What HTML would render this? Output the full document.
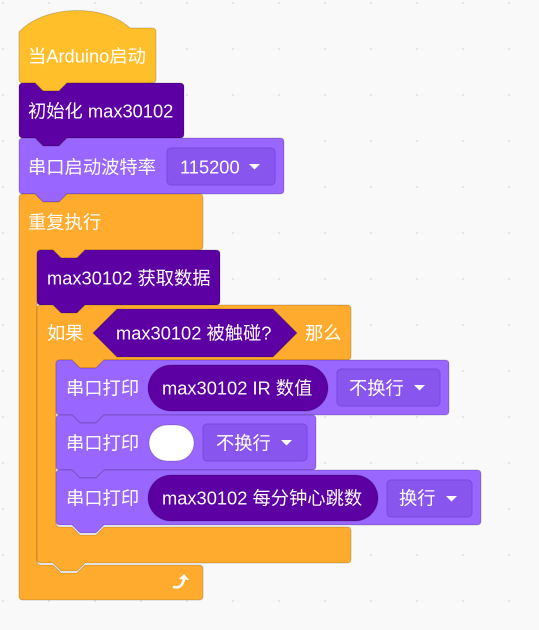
<!DOCTYPE html>
<html><head><meta charset="utf-8"><style>
html,body{margin:0;padding:0;background:#f9f9f9;}
svg{display:block}
text{font-family:"Liberation Sans","Noto Sans CJK SC",sans-serif;font-size:18.3px;fill:#fff;dominant-baseline:central}
</style></head><body>
<svg width="539" height="630" viewBox="0 0 539 630">
<defs><pattern id="d" width="46" height="46" patternUnits="userSpaceOnUse" x="2" y="2"><circle cx="1" cy="1" r="1" fill="#ddd"/></pattern></defs>
<rect width="539" height="630" fill="url(#d)"/>
<g stroke="rgba(0,0,0,0.18)" stroke-width="1">
<path fill="#FFBF2B" d="M19,32 C45,4 105,4 130,28 H152 Q156,28 156,32 V79 Q156,83 152,83 H67 L59,91 H43 L35,83 H23 Q19,83 19,79 Z"/>
<path fill="#5C00A3" d="M19,87 Q19,83 23,83 H35 L43,91 H59 L67,83 H180 Q184,83 184,87 V134 Q184,138 180,138 H67 L59,146 H43 L35,138 H23 Q19,138 19,134 Z"/>
<path fill="#9966FF" d="M19,142 Q19,138 23,138 H35 L43,146 H59 L67,138 H280 Q284,138 284,142 V190 Q284,194 280,194 H67 L59,202 H43 L35,194 H23 Q19,194 19,190 Z"/>
<rect x="167" y="148" width="108" height="37" rx="4" fill="#8855EE" stroke="#7a48dd"/>
<path fill="#FFAB2E" d="M19,198 Q19,194 23,194 H35 L43,202 H59 L67,194 H199 Q203,194 203,198 V246 Q203,250 199,250 H85 L77,258 H61 L53,250 H41 Q37,250 37,254 V561 Q37,565 41,565 H53 L61,573 H77 L85,565 H199 Q203,565 203,569 V596 Q203,600 199,600 H23 Q19,600 19,596 Z"/>
<path fill="#5C00A3" d="M37,254 Q37,250 41,250 H53 L61,258 H77 L85,250 H216 Q220,250 220,254 V301 Q220,305 216,305 H85 L77,313 H61 L53,305 H41 Q37,305 37,301 Z"/>
<path fill="#FFAB2E" d="M37,309 Q37,305 41,305 H53 L61,313 H77 L85,305 H347 Q351,305 351,309 V356 Q351,360 347,360 H104 L96,368 H80 L72,360 H60 Q56,360 56,364 V523 Q56,527 60,527 H72 L80,535 H96 L104,527 H347 Q351,527 351,531 V559 Q351,563 347,563 H85 L77,571 H61 L53,563 H41 Q37,563 37,559 Z"/>
<path fill="#5C00A3" d="M93,333 L117,309 H273 L297,333 L273,357 H117 Z"/>
<path fill="#9966FF" d="M56,364 Q56,360 60,360 H72 L80,368 H96 L104,360 H445 Q449,360 449,364 V411 Q449,415 445,415 H104 L96,423 H80 L72,415 H60 Q56,415 56,411 Z"/>
<rect x="148" y="365" width="180" height="46" rx="23" fill="#5C00A3"/>
<rect x="337" y="369" width="103" height="37" rx="4" fill="#8855EE" stroke="#7a48dd"/>
<path fill="#9966FF" d="M56,419 Q56,415 60,415 H72 L80,423 H96 L104,415 H312 Q316,415 316,419 V466 Q316,470 312,470 H104 L96,478 H80 L72,470 H60 Q56,470 56,466 Z"/>
<rect x="149" y="425" width="45" height="36" rx="18" fill="#fff"/>
<rect x="203" y="424" width="104" height="37" rx="4" fill="#8855EE" stroke="#7a48dd"/>
<path fill="#9966FF" d="M56,474 Q56,470 60,470 H72 L80,478 H96 L104,470 H477 Q481,470 481,474 V521 Q481,525 477,525 H104 L96,533 H80 L72,525 H60 Q56,525 56,521 Z"/>
<rect x="148" y="475" width="230" height="46" rx="23" fill="#5C00A3"/>
<rect x="387" y="480" width="85" height="37" rx="4" fill="#8855EE" stroke="#7a48dd"/>
</g>
<g fill="#fff">
<path d="M249,164 h11 l-5.5,5.5z"/>
<path d="M414,385 h11 l-5.5,5.5z"/>
<path d="M281,440 h11 l-5.5,5.5z"/>
<path d="M446,496 h11 l-5.5,5.5z"/>
</g>
<path d="M174,587 q8,2 10,-8" fill="none" stroke="#fff" stroke-width="2.5" stroke-linecap="round"/>
<path d="M179,579 l5,-5 l5,6 z" fill="#fff"/>
<text x="28" y="56">当Arduino启动</text>
<text x="28" y="111">初始化 max30102</text>
<text x="28" y="167">串口启动波特率</text>
<text x="180" y="167">115200</text>
<text x="28" y="222">重复执行</text>
<text x="47" y="278">max30102 获取数据</text>
<text x="47" y="333">如果</text>
<text x="116" y="333">max30102 被触碰?</text>
<text x="305" y="333">那么</text>
<text x="66" y="388">串口打印</text>
<text x="162" y="388">max30102 IR 数值</text>
<text x="349" y="388">不换行</text>
<text x="66" y="443">串口打印</text>
<text x="216" y="443">不换行</text>
<text x="66" y="498">串口打印</text>
<text x="162" y="498">max30102 每分钟心跳数</text>
<text x="399" y="498">换行</text>
</svg>
</body></html>
